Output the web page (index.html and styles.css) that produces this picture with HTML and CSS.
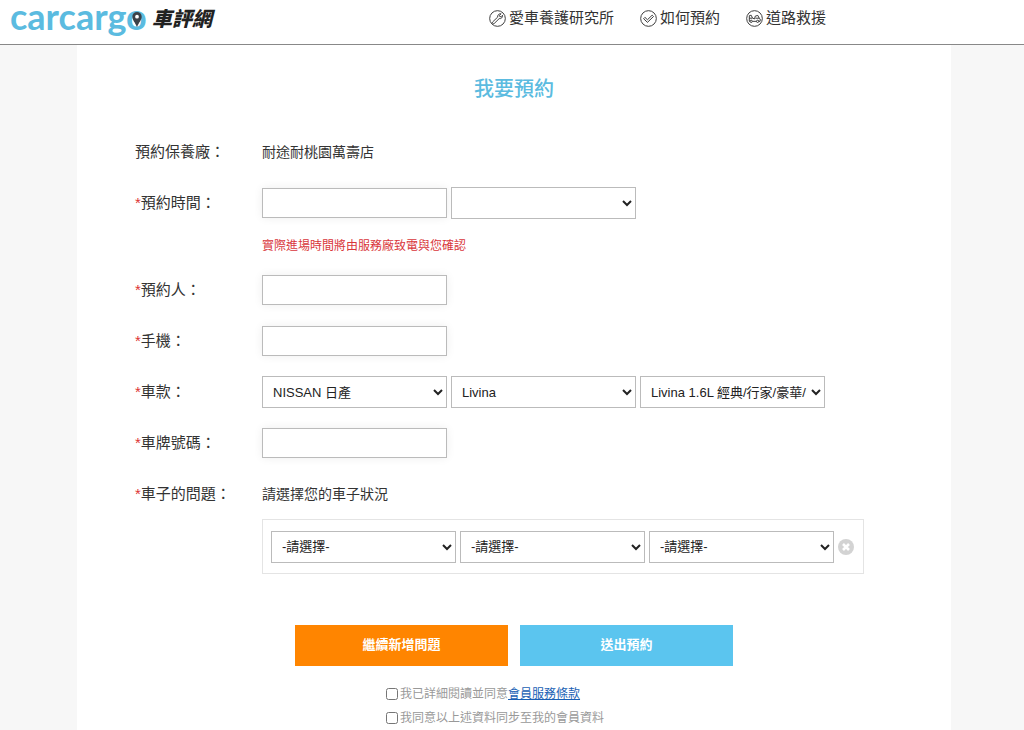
FILE: index.html
```html
<!DOCTYPE html>
<html lang="zh-Hant">
<head>
    <meta charset="UTF-8">
    <meta name="viewport" content="width=device-width, initial-scale=1.0">
    <title>我要預約 - carcargo 車評網</title>
    <link rel="stylesheet" href="styles.css">
</head>
<body>
    <header class="header">
        <a href="#" class="logo">
            <span class="logo-en">carcargo</span>
            <svg class="logo-pin" viewBox="0 0 10 16" aria-hidden="true">
                <path d="M5 0a5 5 0 0 0-5 5c0 3.500 3 6 5 11 2-5 5-7.500 5-11a5 5 0 0 0-5-5z" fill="#3b4148"/>
                <circle cx="5" cy="5" r="2" fill="#fff"/>
            </svg>
            <span class="logo-zh">車評網</span>
        </a>
        <nav class="nav">
            <a href="#">
                <svg viewBox="0 0 18 18" aria-hidden="true">
                    <circle cx="9" cy="9" r="8.300"/>
                    <path d="M3.800 12.700l5.400-5.200c-.4-1.900 1.300-3.900 3.500-3.500l-1.600 1.700.3 1.200 1.300.3 1.600-1.600c.5 2.100-1.500 4-3.500 3.500l-5.300 5.200c-1 .8-2.600-.6-1.700-1.600z"/>
                </svg>
                愛車養護研究所
            </a>
            <a href="#">
                <svg viewBox="0 0 18 18" aria-hidden="true">
                    <circle cx="9" cy="9" r="8.300"/>
                    <path d="M3.800 9.200l1.400-1.400 2.700 2.500 5-4.800 1.400 1.400-6.400 6.200z"/>
                </svg>
                如何預約
            </a>
            <a href="#">
                <svg viewBox="0 0 18 18" aria-hidden="true">
                    <circle cx="9" cy="9" r="8.300"/>
                    <path d="M3.500 11.800V6l2-.5 1.300 3 2.200 1 .8-3 2.700-.8 1.500 3 1 .8v2.300M3.500 8.700h3.300M10 8.700h4"/>
                    <circle cx="5.500" cy="12" r="1.200"/>
                    <circle cx="12.300" cy="12" r="1.200"/>
                    <path d="M6.800 12H11M3.500 12h.8M13.500 12H15"/>
                </svg>
                道路救援
            </a>
        </nav>
    </header>

    <main class="container">
        <h1>我要預約</h1>

        <form>
            <div class="row">
                <span class="label">預約保養廠：</span>
                <span class="value">耐途耐桃園萬壽店</span>
            </div>
            <div class="row">
                <label class="label" for="date"><em>*</em>預約時間：</label>
                <div class="fields">
                    <input type="text" id="date">
                    <select aria-label="時段"><option></option></select>
                </div>
            </div>
            <p class="hint">實際進場時間將由服務廠致電與您確認</p>
            <div class="row">
                <label class="label" for="name"><em>*</em>預約人：</label>
                <div class="fields">
                    <input type="text" id="name">
                </div>
            </div>
            <div class="row">
                <label class="label" for="mobile"><em>*</em>手機：</label>
                <div class="fields">
                    <input type="tel" id="mobile">
                </div>
            </div>
            <div class="row">
                <label class="label" for="brand"><em>*</em>車款：</label>
                <div class="fields">
                    <select id="brand"><option>NISSAN 日產</option></select>
                    <select aria-label="車系"><option>Livina</option></select>
                    <select aria-label="車型"><option>Livina 1.6L 經典/行家/豪華/</option></select>
                </div>
            </div>
            <div class="row">
                <label class="label" for="plate"><em>*</em>車牌號碼：</label>
                <div class="fields">
                    <input type="text" id="plate">
                </div>
            </div>
            <div class="row">
                <label class="label" for="problem"><em>*</em>車子的問題：</label>
                <span class="value">請選擇您的車子狀況</span>
            </div>
            <div class="problem-box">
                <select id="problem"><option>-請選擇-</option></select>
                <select aria-label="問題項目"><option>-請選擇-</option></select>
                <select aria-label="問題狀況"><option>-請選擇-</option></select>
                <button type="button" class="remove" aria-label="刪除">
                    <svg viewBox="0 0 16 16" aria-hidden="true">
                        <circle cx="8" cy="8" r="8" fill="#d3d3d3"/>
                        <path d="M5 5l6 6M11 5l-6 6" stroke="#fff" stroke-width="2.600"/>
                    </svg>
                </button>
            </div>

            <div class="form-footer">
                <div class="actions">
                    <button type="button" class="btn add">繼續新增問題</button>
                    <button type="submit" class="btn send">送出預約</button>
                </div>
                <div class="consent">
                    <input type="checkbox" id="agree">
                    <label for="agree">我已詳細閱讀並同意<a href="#">會員服務條款</a></label>
                </div>
                <div class="consent">
                    <input type="checkbox" id="sync">
                    <label for="sync">我同意以上述資料同步至我的會員資料</label>
                </div>
            </div>
        </form>
    </main>
</body>
</html>
```
FILE: styles.css
```css
* {
    box-sizing: border-box;
}
body {
    margin: 0;
    min-height: 100vh;
    display: flex;
    flex-direction: column;
    background: #f7f7f7;
    color: #333;
    font-family: "Liberation Sans", "Noto Sans CJK TC", sans-serif;
    font-size: 15px;
}

/* header */
.header {
    display: flex;
    align-items: center;
    height: 45px;
    padding: 0 10px 8px;
    background: #fff;
    border-bottom: 1px solid #888;
}
.logo {
    position: relative;
    display: flex;
    align-items: flex-start;
    justify-content: space-between;
    width: 202px;
    height: 36px;
    text-decoration: none;
}
.logo-en {
    color: #5bbbe0;
    font-family: Lato, sans-serif;
    font-size: 36px;
    font-weight: 700;
    line-height: 32px;
}
.logo-pin {
    position: absolute;
    left: 122px;
    top: 12px;
    width: 10px;
    height: 15px;
}
.logo-zh {
    color: #222;
    font-size: 20px;
    font-style: italic;
    font-weight: 900;
    line-height: 38px;
}
.nav {
    display: flex;
    gap: 26px;
    margin-left: 277px;
}
.nav a {
    display: flex;
    align-items: center;
    gap: 3px;
    color: #333;
    line-height: 24px;
    text-decoration: none;
    white-space: nowrap;
}
.nav svg {
    width: 17px;
    height: 17px;
    fill: none;
    stroke: #333;
    stroke-width: 1;
}

/* reservation form */
.container {
    flex: 1;
    margin: 0 73px 0 77px;
    padding: 29px 58px 0;
    background: #fff;
}
h1 {
    margin: 0 0 32px;
    color: #5bbbe0;
    font-size: 20px;
    font-weight: 500;
    line-height: 30px;
    text-align: center;
}
.row {
    display: flex;
    align-items: center;
    min-height: 32px;
    margin-bottom: 19px;
}
.label {
    width: 127px;
    flex-shrink: 0;
    line-height: 24px;
}
.label em {
    color: #d33;
    font-style: normal;
}
.value {
    font-size: 14px;
    line-height: 20px;
}
.fields {
    display: flex;
    align-items: center;
    gap: 4px;
}
input[type="text"],
input[type="tel"] {
    width: 185px;
    height: 30px;
    padding: 0 10px;
    border: 1px solid #bbb;
    box-shadow: 0 0 10px #eee;
    font-family: inherit;
    font-size: 13px;
}
select {
    width: 185px;
    height: 32px;
    padding: 0 0 0 6px;
    border: 1px solid #bbb;
    border-radius: 0;
    background-color: #fff;
    color: #222;
    font-family: inherit;
    font-size: 13px;
}
.hint {
    margin: 0 0 19px 127px;
    color: #d9363b;
    font-size: 12px;
    line-height: 17px;
}
.problem-box {
    display: flex;
    align-items: center;
    gap: 4px;
    width: 602px;
    height: 55px;
    margin: -10px 0 51px 127px;
    padding: 0 8px;
    border: 1px solid #e4e4e4;
}
.remove {
    width: 16px;
    height: 16px;
    padding: 0;
    border: none;
    background: none;
    cursor: pointer;
}
.remove svg {
    display: block;
}

/* buttons and consent */
.form-footer {
    width: 438px;
    margin: 0 auto;
}
.actions {
    display: flex;
    gap: 12px;
    margin-bottom: 16px;
}
.btn {
    flex: 1;
    height: 41px;
    padding: 0 0 4px;
    border: none;
    color: #fff;
    font-family: inherit;
    font-size: 13px;
    font-weight: 700;
    cursor: pointer;
}
.add {
    background: #ff8500;
}
.send {
    background: #5bc5ef;
}
.consent {
    display: flex;
    align-items: center;
    gap: 2px;
    margin-left: 91px;
    color: #999;
    font-size: 12px;
    line-height: 24px;
}
.consent input {
    width: 12px;
    height: 12px;
    margin: 0;
}
.consent a {
    color: #1a5fb4;
}
```
